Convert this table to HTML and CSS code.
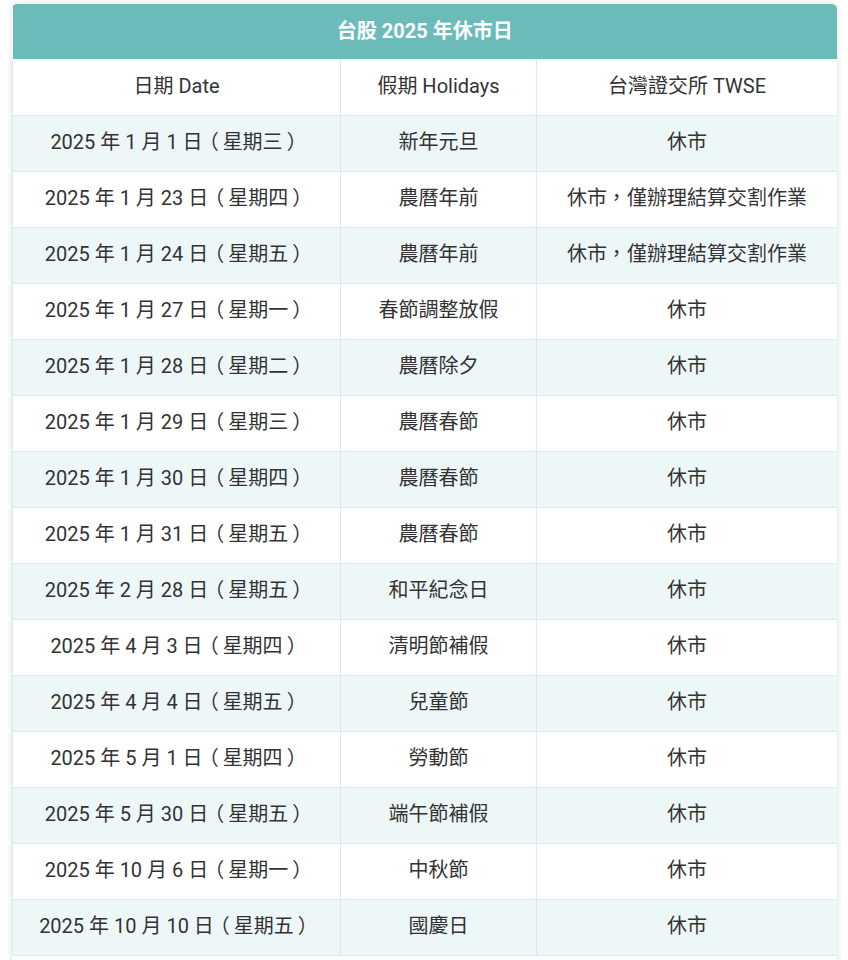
FILE: index.html
```html
<!DOCTYPE html>
<html lang="zh-TW">
<head>
<meta charset="utf-8">
<link rel="stylesheet" href="styles.css">
</head>
<body>
<div class="page">
  <div class="card">
    <table class="holidays">
      <colgroup>
        <col class="c1">
        <col class="c2">
        <col class="c3">
      </colgroup>
      <thead>
        <tr><th class="title" colspan="3">台股 2025 年休市日</th></tr>
        <tr class="cols"><th>日期 Date</th><th>假期 Holidays</th><th>台灣證交所 TWSE</th></tr>
      </thead>
      <tbody>
        <tr><td>2025 年 1 月 1 日<span class="lp">（</span>星期三<span class="rp">）</span></td><td>新年元旦</td><td>休市</td></tr>
        <tr><td>2025 年 1 月 23 日<span class="lp">（</span>星期四<span class="rp">）</span></td><td>農曆年前</td><td>休市<span class="cm">，</span>僅辦理結算交割作業</td></tr>
        <tr><td>2025 年 1 月 24 日<span class="lp">（</span>星期五<span class="rp">）</span></td><td>農曆年前</td><td>休市<span class="cm">，</span>僅辦理結算交割作業</td></tr>
        <tr><td>2025 年 1 月 27 日<span class="lp">（</span>星期一<span class="rp">）</span></td><td>春節調整放假</td><td>休市</td></tr>
        <tr><td>2025 年 1 月 28 日<span class="lp">（</span>星期二<span class="rp">）</span></td><td>農曆除夕</td><td>休市</td></tr>
        <tr><td>2025 年 1 月 29 日<span class="lp">（</span>星期三<span class="rp">）</span></td><td>農曆春節</td><td>休市</td></tr>
        <tr><td>2025 年 1 月 30 日<span class="lp">（</span>星期四<span class="rp">）</span></td><td>農曆春節</td><td>休市</td></tr>
        <tr><td>2025 年 1 月 31 日<span class="lp">（</span>星期五<span class="rp">）</span></td><td>農曆春節</td><td>休市</td></tr>
        <tr><td>2025 年 2 月 28 日<span class="lp">（</span>星期五<span class="rp">）</span></td><td>和平紀念日</td><td>休市</td></tr>
        <tr><td>2025 年 4 月 3 日<span class="lp">（</span>星期四<span class="rp">）</span></td><td>清明節補假</td><td>休市</td></tr>
        <tr><td>2025 年 4 月 4 日<span class="lp">（</span>星期五<span class="rp">）</span></td><td>兒童節</td><td>休市</td></tr>
        <tr><td>2025 年 5 月 1 日<span class="lp">（</span>星期四<span class="rp">）</span></td><td>勞動節</td><td>休市</td></tr>
        <tr><td>2025 年 5 月 30 日<span class="lp">（</span>星期五<span class="rp">）</span></td><td>端午節補假</td><td>休市</td></tr>
        <tr><td>2025 年 10 月 6 日<span class="lp">（</span>星期一<span class="rp">）</span></td><td>中秋節</td><td>休市</td></tr>
        <tr><td>2025 年 10 月 10 日<span class="lp">（</span>星期五<span class="rp">）</span></td><td>國慶日</td><td>休市</td></tr>
      </tbody>
    </table>
    <div class="tail"></div>
  </div>
</div>
</body>
</html>
```
FILE: styles.css
```css
html, body {
  margin: 0;
  padding: 0;
  background: #ffffff;
}
.page {
  padding: 4px 11px 0 12px;
  font-family: Roboto, "Noto Sans CJK TC", "Noto Sans TC", sans-serif;
  color: #333333;
}
.card {
  background: #ffffff;
  border-radius: 5px;
  overflow: hidden;
  box-shadow: 0 0 6px rgba(0, 0, 0, 0.14);
}
.holidays {
  width: 100%;
  border-collapse: collapse;
  table-layout: fixed;
  font-size: 20px;
  line-height: 1.2;
}
.c1 { width: 328px; }
.c2 { width: 196px; }
.holidays th, .holidays td {
  height: 56px;
  padding: 0 0 2px 0;
  text-align: center;
  vertical-align: middle;
  box-sizing: border-box;
}
.title {
  background: #6cbbbb;
  color: #ffffff;
  font-weight: 700;
  height: 55px !important;
  padding-bottom: 1px !important;
}
.cols th {
  font-weight: 400;
  background: #ffffff;
  border-left: 1px solid #d6ecee;
}
.holidays td {
  border-top: 1px solid #d6ecee;
  border-left: 1px solid #d6ecee;
}
.holidays tbody tr:nth-child(odd) td {
  background: #eef7f8;
}
.holidays tbody tr:last-child td {
  border-bottom: 1px solid #d6ecee;
}
.lp, .rp, .cm {
  font-feature-settings: "halt" 1;
}
.lp {
  margin-left: 0.3em;
  margin-right: 0.2em;
}
.rp {
  margin-left: 0.2em;
  margin-right: 0.3em;
}
.cm {
  margin-left: 0.22em;
  margin-right: 0.28em;
}
.tail {
  height: 20px;
}
```
